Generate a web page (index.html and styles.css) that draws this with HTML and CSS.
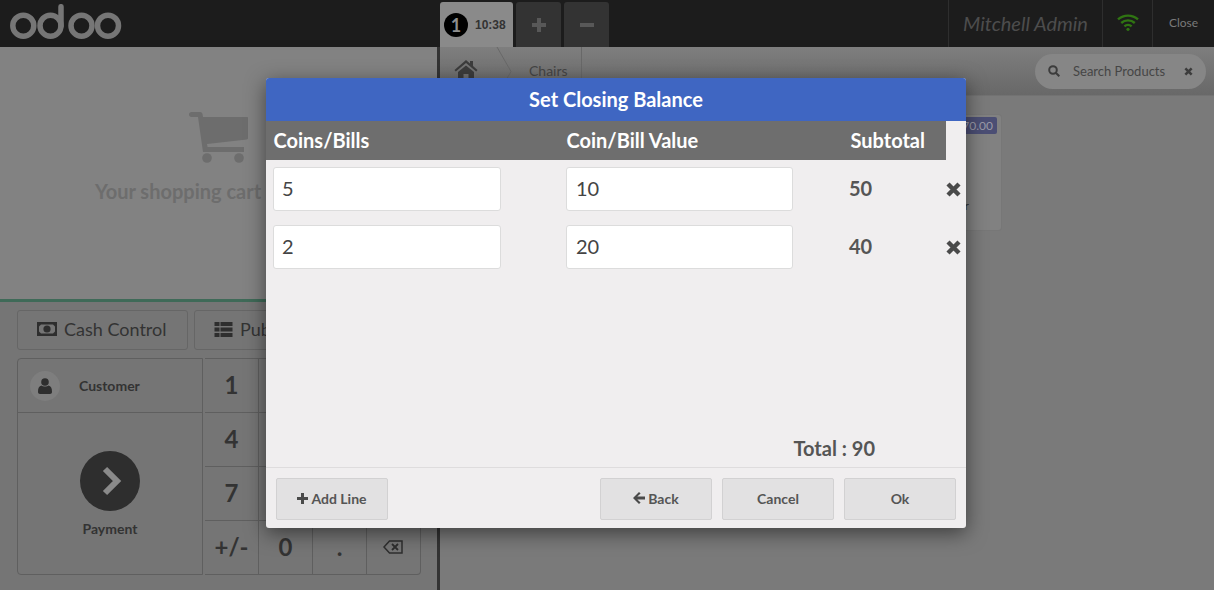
FILE: index.html
```html
<!DOCTYPE html>
<html lang="en">
<head>
  <meta charset="UTF-8" />
  <title>Point of Sale</title>
  <link rel="stylesheet" href="styles.css">
</head>
<body>
  <div class="topbar">
    <svg class="logo" width="112" height="36" viewBox="0 0 112 36">
      <g fill="none" stroke="#767676" stroke-width="5.500">
        <circle cx="13.300" cy="21.700" r="10.500"/>
        <circle cx="40.500" cy="21.700" r="10.500"/>
        <circle cx="71.500" cy="21.700" r="10.500"/>
        <circle cx="98" cy="21.700" r="10.500"/>
      </g>
      <path d="M51 2.700v19" stroke="#767676" stroke-width="5.500" stroke-linecap="round"/>
    </svg>
    <div class="tabs">
      <div class="tab tab-active">
        <span class="tab-num">1</span>
        <span class="tab-time">10:38</span>
      </div>
      <div class="tab tab-btn">
        <svg width="16" height="16" viewBox="0 0 16 16"><path d="M6 1h4v5h5v4h-5v5H6v-5H1V6h5z" fill="#585858"/></svg>
      </div>
      <div class="tab tab-btn">
        <svg width="16" height="16" viewBox="0 0 16 16"><path d="M1 6h14v4H1z" fill="#585858"/></svg>
      </div>
    </div>
    <div class="status">
      <div class="status-item user">Mitchell Admin</div>
      <div class="status-item wifi">
        <svg width="22" height="17" viewBox="0 0 22 17" fill="none" stroke="#2f7412" stroke-width="2.400">
          <path d="M1 5.400a15 15 0 0 1 20 0"/>
          <path d="M4.200 9a10 10 0 0 1 13.600 0"/>
          <path d="M7.400 12.300a5.400 5.400 0 0 1 7.200 0"/>
          <circle cx="11" cy="15.300" r="1.600" fill="#2f7412" stroke="none"/>
        </svg>
      </div>
      <div class="status-item close">Close</div>
    </div>
  </div>

  <div class="main">
    <div class="left">
      <div class="cart">
        <svg class="cart-icon" width="60" height="52" viewBox="0 0 60 52" fill="#6d6d6d">
          <path d="M0 2.500C0 1 1 0 2.500 0H11c1.500 0 2.200.8 2.500 2l.5 3h44c.6 0 1 .4 1 1v20c0 .8-.5 1.300-1.200 1.400L18 32l.6 3H55v5H14L9 5H2.500C1 5 0 4 0 2.500z"/>
          <circle cx="18" cy="46" r="4.800"/>
          <circle cx="50" cy="46" r="4.800"/>
        </svg>
        <div class="cart-text">Your shopping cart is empty</div>
      </div>
      <div class="controls">
        <div class="control-btn">
          <svg width="20" height="14" viewBox="0 0 20 14"><path fill-rule="evenodd" d="M0 0h20v14H0zM4 2.500 2 4.500v5l2 2h12l2-2v-5l-2-2z" fill="#2e2e2e"/><circle cx="10" cy="7" r="3.600" fill="#2e2e2e"/></svg>
          Cash Control
        </div>
        <div class="control-btn">
          <svg width="19" height="15" viewBox="0 0 18 15" fill="#2e2e2e"><path d="M0 0h5v4H0zM6 0h12v4H6zM0 5.500h5v4H0zM6 5.500h12v4H6zM0 11h5v4H0zM6 11h12v4H6z"/></svg>
          Publish Order
        </div>
      </div>
      <div class="pad">
        <div class="actionpad">
          <div class="customer">
            <span class="avatar">
              <svg width="14" height="16" viewBox="0 0 14 16" fill="#2e2e2e"><circle cx="7" cy="4" r="3.800"/><path d="M0 14c0-4 1-6 3.500-6.500C5 8.800 9 8.800 10.500 7.500 13 8 14 10 14 14c0 1.200-.8 2-2 2H2c-1.200 0-2-.8-2-2z"/></svg>
            </span>
            Customer
          </div>
          <div class="payment">
            <span class="pay-circle">
              <svg width="20" height="30" viewBox="0 0 20 30"><path d="M3 3l12 12L3 27" fill="none" stroke="#8a8a8a" stroke-width="6"/></svg>
            </span>
            Payment
          </div>
        </div>
        <!-- the keys left empty sit behind the popup -->
        <div class="numpad">
          <div class="key">1</div><div class="key"></div><div class="key"></div><div class="key"></div>
          <div class="key">4</div><div class="key"></div><div class="key"></div><div class="key"></div>
          <div class="key">7</div><div class="key"></div><div class="key"></div><div class="key"></div>
          <div class="key">+/-</div><div class="key">0</div><div class="key">.</div>
          <div class="key">
            <svg class="back-icon" width="20" height="14" viewBox="0 0 20 14" fill="none" stroke="#2e2e2e" stroke-width="1.500"><path d="M6.500 1H19v12H6.500L1 7z"/><path d="M9 4l6 6M15 4l-6 6" stroke-width="1.800"/></svg>
          </div>
        </div>
      </div>
    </div>
    <div class="right">
      <div class="crumbs">
        <div class="crumb-home">
          <svg width="24" height="20" viewBox="0 0 24 20" fill="#3c3c3c"><path d="M12 1l4 3.500V2h3v5l4.500 4-1.300 1.500L12 4 1.800 12.500.5 11z"/><path d="M4 13l8-6.500 8 6.500v7h-5.500v-5h-5v5H4z"/></svg>
        </div>
        <svg class="crumb-sep" width="16" height="49" viewBox="0 0 16 49" fill="none" stroke="#686868"><path d="M1 0l14 24.500L1 49"/></svg>
        <div class="crumb">Chairs</div>
        <div class="search">
          <svg width="12" height="12" viewBox="0 0 12 12" fill="none" stroke="#3c3c3c" stroke-width="2"><circle cx="5" cy="5" r="3.800"/><path d="M8 8l3.300 3.300"/></svg>
          <span class="search-text">Search Products</span>
          <svg class="search-x" width="9" height="9" viewBox="0 0 10 10"><path d="M1.500 1.500l7 7M8.500 1.500l-7 7" stroke="#3c3c3c" stroke-width="2.800"/></svg>
        </div>
      </div>
      <div class="products">
        <div class="product">
          <span class="price">$ 70.00</span>
          <span class="product-name">Office Chair</span>
        </div>
      </div>
    </div>
  </div>

  <div class="modal">
    <div class="modal-title">Set Closing Balance</div>
    <div class="modal-body">
      <div class="cols cols-head">
        <div>Coins/Bills</div>
        <div>Coin/Bill Value</div>
        <div>Subtotal</div>
      </div>
      <div class="cols cols-row">
        <input class="money" type="text" value="5">
        <input class="money" type="text" value="10">
        <div class="subtotal">50</div>
        <svg class="remove" width="15" height="15" viewBox="0 0 15 15"><path d="M2 2l11 11M13 2L2 13" stroke="#4a4a4a" stroke-width="4.400"/></svg>
      </div>
      <div class="cols cols-row">
        <input class="money" type="text" value="2">
        <input class="money" type="text" value="20">
        <div class="subtotal">40</div>
        <svg class="remove" width="15" height="15" viewBox="0 0 15 15"><path d="M2 2l11 11M13 2L2 13" stroke="#4a4a4a" stroke-width="4.400"/></svg>
      </div>
      <div class="total">Total : 90</div>
    </div>
    <div class="modal-foot">
      <div class="btn">
        <svg class="btn-icon" width="11" height="11" viewBox="0 0 11 11"><path d="M4 0h3v4h4v3H7v4H4V7H0V4h4z" fill="#4a4a4a"/></svg>
        <span>Add Line</span>
      </div>
      <div class="foot-right">
        <div class="btn">
          <svg class="btn-icon" width="12" height="12" viewBox="0 0 12 12"><path d="M6 0l1.600 1.600L4.300 4.500H12v3H4.300l3.300 2.900L6 12 0 6z" fill="#4a4a4a"/></svg>
          <span>Back</span>
        </div>
        <div class="btn">Cancel</div>
        <div class="btn">Ok</div>
      </div>
    </div>
  </div>
</body>
</html>
```
FILE: styles.css
```css
* {
  box-sizing: border-box;
}
html, body {
  height: 100%;
}
body {
  margin: 0;
  overflow: hidden;
  font-family: Lato, "Open Sans", sans-serif;
  color: #333;
  background: #757575;
  display: flex;
  flex-direction: column;
}

/* top bar */
.topbar {
  display: flex;
  height: 47px;
  flex: none;
  background: #1c1c1c;
}
.logo {
  flex: none;
  width: 112px;
  height: 36px;
  margin: 4px 0 0 10px;
}
.tabs {
  display: flex;
  margin-left: 318px;
  padding-top: 2px;
  gap: 3px;
}
.tab {
  display: flex;
  align-items: center;
  justify-content: center;
  height: 45px;
  border-radius: 3px 3px 0 0;
}
.tab-active {
  width: 73px;
  justify-content: flex-start;
  padding-left: 4px;
  background: #8a8a8a;
  gap: 7px;
}
.tab-btn {
  width: 45px;
  background: #333;
}
.tab-num {
  width: 24px;
  height: 24px;
  border-radius: 50%;
  background: #000;
  color: #8e8e8e;
  font: bold 18px/24px Lato, sans-serif;
  text-align: center;
}
.tab-time {
  font: bold 12px "Liberation Sans", sans-serif;
  color: #333;
}
.status {
  display: flex;
  margin-left: auto;
}
.status-item {
  display: flex;
  align-items: center;
  justify-content: center;
  border-left: 1px solid #2e2e2e;
}
.user {
  width: 154px;
  padding-bottom: 2px;
  font-size: 20px;
  font-style: italic;
  color: #4d4d4d;
}
.wifi {
  width: 50px;
  padding-bottom: 2px;
}
.close {
  width: 62px;
  padding-bottom: 2px;
  font-size: 12px;
  color: #7a7a7a;
}

/* main area under the popup */
.main {
  flex: 1;
  display: flex;
  min-height: 0;
}
.left {
  width: 440px;
  flex: none;
  border-right: 3px solid #333;
}
.cart {
  height: 255px;
  background: #828282;
  border-bottom: 3px solid #3f6a58;
  padding-top: 65px;
}
.cart-icon {
  display: block;
  margin-left: 189px;
}
.cart-text {
  margin-top: 15px;
  padding-left: 95px;
  font-size: 20px;
  font-weight: bold;
  color: #6d6d6d;
  white-space: nowrap;
}
.controls {
  display: flex;
  gap: 6px;
  margin: 8px 0 8px 17px;
}
.control-btn {
  display: flex;
  align-items: center;
  gap: 7px;
  width: 171px;
  height: 40px;
  padding: 0 0 2px 19px;
  border: 1px solid #666;
  border-radius: 3px;
  font-size: 18px;
  white-space: nowrap;
}
.pad {
  display: flex;
  margin-left: 17px;
  gap: 2px;
}
.actionpad {
  width: 186px;
  height: 217px;
  border: 1px solid #5f5f5f;
  border-radius: 4px 0 0 4px;
}
.customer {
  display: flex;
  align-items: center;
  height: 54px;
  padding-left: 12px;
  gap: 19px;
  border-bottom: 1px solid #5f5f5f;
  font-size: 14px;
  font-weight: bold;
}
.avatar {
  display: flex;
  align-items: center;
  justify-content: center;
  width: 30px;
  height: 30px;
  border-radius: 50%;
  background: #7e7e7e;
}
.payment {
  display: flex;
  flex-direction: column;
  align-items: center;
  padding-top: 38px;
  gap: 9px;
  font-size: 14px;
  font-weight: bold;
}
.pay-circle {
  display: flex;
  align-items: center;
  justify-content: center;
  width: 60px;
  height: 60px;
  padding-left: 4px;
  border-radius: 50%;
  background: #2e2e2e;
}
.numpad {
  display: grid;
  grid-template-columns: 54px 54px 54px 53px;
  grid-template-rows: 54px 54px 54px 53px;
  height: 217px;
  border: 1px solid #5f5f5f;
  border-left: 0;
  border-radius: 0 0 4px 0;
}
.key {
  display: flex;
  align-items: center;
  justify-content: center;
  padding-bottom: 2px;
  border-right: 1px solid #5f5f5f;
  border-bottom: 1px solid #5f5f5f;
  font-size: 24px;
  font-weight: bold;
}
.key:nth-last-child(-n+4) {
  border-bottom: 0;
}
.key:nth-child(4n) {
  border-right: 0;
}
.back-icon {
  margin-right: 2px;
}
.right {
  flex: 1;
  background: #7a7a7a;
}
.crumbs {
  display: flex;
  align-items: center;
  height: 49px;
  background: linear-gradient(#7e7e7e, #686868);
  border-bottom: 1px solid #727272;
}
.crumb-home {
  width: 56px;
  padding: 0 0 2px 14px;
}
.crumb-sep {
  flex: none;
}
.crumb {
  height: 49px;
  padding: 15px 13px 0 17px;
  border-right: 1px solid #686868;
  font-size: 14px;
  color: #454545;
}
.search {
  display: flex;
  align-items: center;
  width: 171px;
  height: 35px;
  margin-left: auto;
  margin-right: 8px;
  padding: 0 13px;
  border-radius: 18px;
  background: #868686;
  font-size: 13px;
  color: #454545;
}
.search-text {
  margin-left: 13px;
}
.search-x {
  margin-left: auto;
}
.products {
  padding: 19px 0 0 348px;
}
.product {
  position: relative;
  width: 213px;
  height: 115px;
  background: #818181;
  border-radius: 3px;
  box-shadow: 0 0 0 1px #777;
}
.price {
  position: absolute;
  top: 2px;
  right: 4px;
  height: 17px;
  padding: 0 4px;
  background: #4b4e74;
  border-radius: 2px;
  font-size: 12px;
  line-height: 17px;
  color: #9a9aa8;
}
.product-name {
  position: absolute;
  top: 83px;
  right: 32px;
  font-size: 12px;
}

/* closing balance popup */
.modal {
  position: absolute;
  left: 266px;
  top: 78px;
  width: 700px;
  height: 450px;
  display: flex;
  flex-direction: column;
  background: #f0eeef;
  border-radius: 3px;
  box-shadow: 0 5px 20px rgb(0 0 0 / 0.5);
}
.modal-title {
  height: 43px;
  flex: none;
  background: #3f66c2;
  color: #fff;
  border-radius: 3px 3px 0 0;
  font-size: 20px;
  font-weight: bold;
  line-height: 43px;
  text-align: center;
}
.modal-body {
  flex: 1;
  display: flex;
  flex-direction: column;
  min-height: 0;
}
.cols {
  display: grid;
  align-items: center;
}
.cols-head {
  grid-template-columns: 293px 284px 1fr;
  width: 680px;
  height: 39px;
  padding: 0 0 2px 7.500px;
  background: #6e6e6e;
  color: #fff;
  font-size: 20px;
  font-weight: bold;
}
.cols-row {
  grid-template-columns: 293px 283px 1fr;
  position: relative;
  padding-left: 7px;
  margin: 7px 0;
  height: 44px;
}
.money {
  width: 228px;
  height: 44px;
  padding: 0 8px 2px;
  border: 1px solid #dcdcdc;
  border-radius: 3px;
  background: #fff;
  font: 20px Lato, sans-serif;
  color: #444;
  outline: none;
}
.money + .money {
  width: 227px;
  padding-left: 9px;
}
.subtotal {
  padding-bottom: 2px;
  font-size: 20px;
  font-weight: bold;
  color: #555;
}
.remove {
  position: absolute;
  left: 680px;
  top: 15px;
}
.total {
  margin-top: auto;
  padding: 0 91px 7px 0;
  text-align: right;
  font-size: 20px;
  font-weight: bold;
  color: #555;
}
.modal-foot {
  display: flex;
  justify-content: space-between;
  height: 61px;
  flex: none;
  padding: 10px;
  border-top: 1px solid #dedcdd;
}
.foot-right {
  display: flex;
  gap: 10px;
}
.btn {
  display: flex;
  align-items: center;
  justify-content: center;
  gap: 3px;
  width: 112px;
  height: 42px;
  padding-bottom: 2px;
  background: #e2e1e2;
  border: 1px solid #d2d1d2;
  border-radius: 2px;
  font-size: 14px;
  font-weight: bold;
  color: #555;
}
.btn span {
  white-space: nowrap;
}
.btn-icon {
  flex: none;
}
```
